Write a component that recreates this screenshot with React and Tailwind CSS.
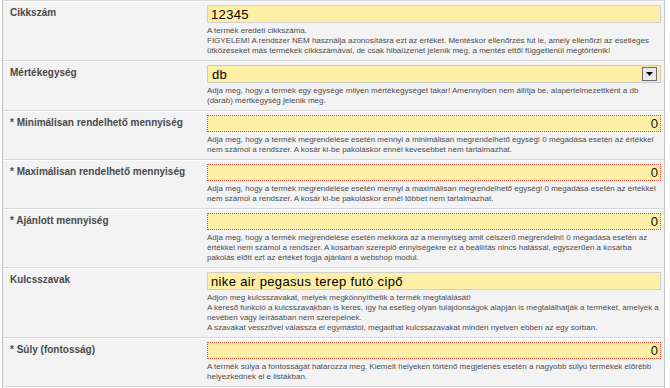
const rows = [
  {
    label: "Cikkszám",
    kind: "text",
    value: "12345",
    help: [
      "A termék eredeti cikkszáma.",
      "FIGYELEM! A rendszer NEM használja azonosításra ezt az értéket. Mentéskor ellenőrzés fut le, amely ellenőrzi az esetleges",
      "ütközéseket más termékek cikkszámával, de csak hibaüzenet jelenik meg, a mentés ettől függetlenül megtörténik!",
    ],
  },
  {
    label: "Mértékegység",
    kind: "select",
    value: "db",
    help: [
      "Adja meg, hogy a termék egy egysége milyen mértékegységet takar! Amennyiben nem állítja be, alapértelmezettként a db",
      "(darab) mértkegység jelenik meg.",
    ],
  },
  {
    label: "* Minimálisan rendelhető mennyiség",
    kind: "number",
    value: "0",
    help: [
      "Adja meg, hogy a termék megrendelése esetén mennyi a minimálisan megrendelhető egység! 0 megadása esetén az értékkel",
      "nem számol a rendszer. A kosár ki-be pakoláskor ennél kevesebbet nem tartalmazhat.",
    ],
  },
  {
    label: "* Maximálisan rendelhető mennyiség",
    kind: "number",
    value: "0",
    help: [
      "Adja meg, hogy a termék megrendelése esetén mennyi a maximálisan megrendelhető egység! 0 megadása esetén az értékkel",
      "nem számol a rendszer. A kosár ki-be pakoláskor ennél többet nem tartalmazhat.",
    ],
  },
  {
    label: "* Ajánlott mennyiség",
    kind: "number",
    value: "0",
    help: [
      "Adja meg, hogy a termék megrendelése esetén mekkora az a mennyiség amit célszerű megrendelni! 0 megadása esetén az",
      "értékkel nem számol a rendszer. A kosárban szereplő ennyiségekre ez a beállítás nincs hatással, egyszerűen a kosárba",
      "pakolás előtt ezt az értéket fogja ajánlani a webshop modul.",
    ],
  },
  {
    label: "Kulcsszavak",
    kind: "text",
    value: "nike air pegasus terep futó cipő",
    help: [
      "Adjon meg kulcsszavakat, melyek megkönnyíthetik a termék megtalálását!",
      "A kereső funkció a kulcsszavakban is keres, így ha esetleg olyan tulajdonságok alapján is megtalálhatják a terméket, amelyek a",
      "nevében vagy leírásában nem szerepelnek.",
      "A szavakat vesszővel válassza el egymástól, megadhat kulcssazavakat minden nyelven ebben az egy sorban.",
    ],
  },
  {
    label: "* Súly (fontosság)",
    kind: "number",
    value: "0",
    help: [
      "A termék súlya a fontosságát határozza meg. Kiemelt helyeken történő megjelenés esetén a nagyobb súlyú termékek előrébb",
      "helyezkednek el e listákban.",
    ],
  },
];

function Field({ row }) {
  if (row.kind === "select") {
    return (
      <div className="flex h-[18px] items-center justify-between border border-[#c9c9c9] bg-[#ffeea6] pl-[4px] pr-[3px]">
        <span className="text-[13px] leading-none tracking-[0.3px] text-black">{row.value}</span>
        <span className="flex h-[14px] w-[15px] items-center justify-center border border-[#6b6b6b] bg-[#e9e9e9]">
          <svg width="7" height="4" viewBox="0 0 7 4">
            <path d="M0 0h7L3.5 4z" fill="#000" />
          </svg>
        </span>
      </div>
    );
  }
  if (row.kind === "number") {
    return (
      <div className="flex h-[17px] items-center justify-end border border-dotted border-[#ef4b32] bg-[#ffeea6] pr-[2px]">
        <span className="text-[13px] leading-none text-[#111]">{row.value}</span>
      </div>
    );
  }
  return (
    <div className="flex h-[18px] items-center border border-[#cfcfcf] bg-[#ffeea6] pl-[3px]">
      <span className="text-[13px] leading-none tracking-[0.35px] text-black">{row.value}</span>
    </div>
  );
}

export default function App() {
  return (
    <div
      className="h-[388px] w-[670px] bg-white"
      style={{ fontFamily: '"Liberation Sans", Arial, sans-serif' }}
    >
      <div className="ml-[2px] w-[663px] border-x border-b border-[#c3c3c3] bg-[#f3f3f3]">
        {rows.map((row) => (
          <div
            key={row.label}
            className="grid grid-cols-[204px_1fr] border-t border-[#d9d9d9] pr-[3px] pt-[4px] pb-[4px] shadow-[inset_0_1px_0_#ffffff]"
          >
            <div className="pl-[7px] pt-[2px] text-[10px] font-bold leading-[12px] text-[#4a4a4a]">
              {row.label}
            </div>
            <div>
              <Field row={row} />
              <div className="mt-[3px] text-[8px] leading-[10px] text-[#4d4d4d]">
                {row.help.map((line) => (
                  <div key={line} className="whitespace-nowrap">
                    {line}
                  </div>
                ))}
              </div>
            </div>
          </div>
        ))}
        <div className="h-[3px] border-t border-[#d9d9d9] shadow-[inset_0_1px_0_#ffffff]" />
      </div>
    </div>
  );
}
